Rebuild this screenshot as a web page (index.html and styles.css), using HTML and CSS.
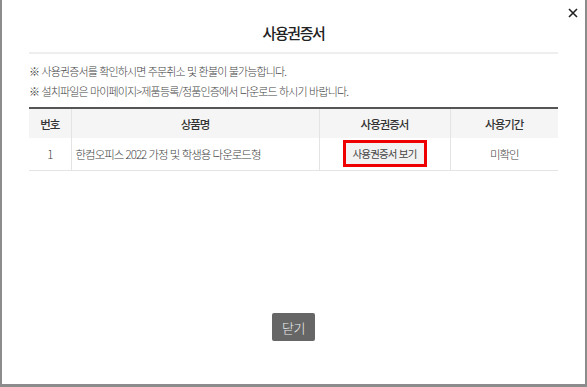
FILE: index.html
```html
<!DOCTYPE html>
<html lang="ko">
<head>
    <meta charset="UTF-8">
    <meta name="viewport" content="width=device-width, initial-scale=1.0">
    <title>사용권증서</title>
    <link rel="stylesheet" href="styles.css">
</head>
<body>
    <div class="popup">
        <button type="button" class="close-x" aria-label="닫기">
            <svg width="10" height="10" viewBox="0 0 10 10">
                <path d="M1 1 L9 9 M9 1 L1 9" stroke="#222" stroke-width="1.6" fill="none"/>
            </svg>
        </button>

        <h1 class="popup-title">사용권증서</h1>

        <ul class="notice">
            <li>※ 사용권증서를 확인하시면 주문취소 및 환불이 불가능합니다.</li>
            <li>※ 설치파일은 마이페이지&gt;제품등록/정품인증에서 다운로드 하시기 바랍니다.</li>
        </ul>

        <table class="license-table">
            <colgroup>
                <col class="col-no">
                <col class="col-name">
                <col class="col-cert">
                <col class="col-period">
            </colgroup>
            <thead>
                <tr>
                    <th>번호</th>
                    <th>상품명</th>
                    <th>사용권증서</th>
                    <th>사용기간</th>
                </tr>
            </thead>
            <tbody>
                <tr>
                    <td>1</td>
                    <td class="name">한컴오피스 2022 가정 및 학생용 다운로드형</td>
                    <td><button type="button" class="cert-btn">사용권증서 보기</button></td>
                    <td>미확인</td>
                </tr>
            </tbody>
        </table>

        <div class="popup-footer">
            <button type="button" class="close-btn">닫기</button>
        </div>
    </div>
</body>
</html>
```

FILE: styles.css
```css
* {
    margin: 0;
    padding: 0;
    box-sizing: border-box;
}

body {
    font-family: "Noto Sans CJK KR", "Noto Sans", sans-serif;
    background: #fff;
    color: #555;
}

.popup {
    position: relative;
    width: 587px;
    height: 387px;
    border-left: 2px solid #8c8c8c;
    border-right: 2px solid #8c8c8c;
    border-bottom: 3px solid #8c8c8c;
    padding: 0 27px;
    display: flex;
    flex-direction: column;
}

.close-x {
    position: absolute;
    top: 8px;
    right: 7px;
    width: 10px;
    height: 10px;
    border: none;
    background: none;
    display: flex;
    cursor: pointer;
}

.popup-title {
    font-size: 15px;
    font-weight: 500;
    color: #222;
    text-align: center;
    line-height: 24px;
    letter-spacing: -1.4px;
    padding: 21px 0 7px;
    border-bottom: 2px solid #eee;
}

.notice {
    list-style: none;
    margin-top: 7px;
    font-size: 11px;
    font-weight: 300;
    line-height: 20px;
    color: #444;
    letter-spacing: -0.85px;
}

.license-table {
    width: 100%;
    margin-top: 6px;
    border-collapse: collapse;
    border-top: 2px solid #555;
    table-layout: fixed;
    font-size: 11.5px;
    letter-spacing: -1px;
}

.col-no { width: 42px; }
.col-cert { width: 131px; }
.col-period { width: 108px; }

.license-table th {
    height: 30px;
    background: #f5f5f5;
    color: #333;
    font-weight: 500;
    border-left: 1px solid #e4e4e4;
}

.license-table td {
    height: 32px;
    text-align: center;
    color: #444;
    font-weight: 300;
    border-left: 1px solid #e4e4e4;
    border-bottom: 1px solid #e4e4e4;
}

.license-table th:first-child,
.license-table td:first-child {
    border-left: none;
}

.license-table td.name {
    text-align: left;
    padding-left: 4px;
}

.cert-btn {
    width: 84px;
    height: 27px;
    border: 3px solid #ee0000;
    background: #f2f2f2;
    font-family: inherit;
    font-size: 10.5px;
    font-weight: 400;
    color: #444;
    letter-spacing: -0.8px;
    cursor: pointer;
    vertical-align: middle;
}

.popup-footer {
    margin-top: auto;
    padding-bottom: 43px;
    display: flex;
    justify-content: center;
}

.close-btn {
    width: 43px;
    height: 28px;
    border: none;
    border-radius: 2px;
    background: #666;
    color: #eee;
    font-family: inherit;
    font-size: 13px;
    font-weight: 300;
    letter-spacing: -0.5px;
    cursor: pointer;
}
```
